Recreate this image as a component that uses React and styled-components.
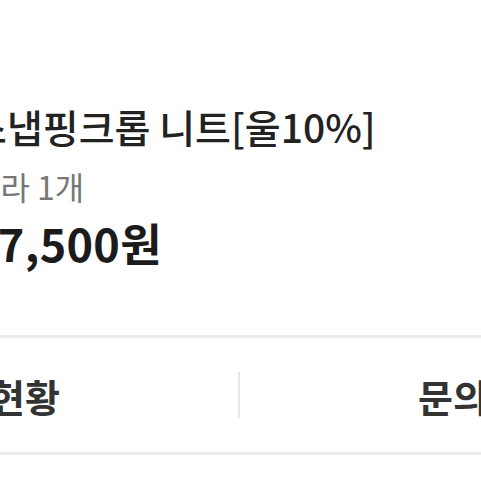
import React from "react";
import styled, { createGlobalStyle } from "styled-components";

const Global = createGlobalStyle`
  html, body { margin: 0; padding: 0; background: #ffffff; }
  body { font-family: "Noto Sans CJK KR", "Noto Sans", sans-serif; }
`;

const Page = styled.div`
  width: 481px;
  height: 481px;
  overflow: hidden;
  background: #ffffff;
  display: flex;
  flex-direction: column;
`;

const Info = styled.div`
  display: flex;
  flex-direction: column;
  margin-left: -29px;
  padding-top: 101px;
  height: 335px;
  box-sizing: border-box;
  flex-shrink: 0;
`;

const Title = styled.div`
  font-size: 39px;
  font-weight: 500;
  color: #222222;
  line-height: 50px;
  white-space: nowrap;
`;

const Option = styled.div`
  font-size: 32px;
  font-weight: 400;
  color: #777777;
  line-height: 40px;
  margin-top: 15px;
  white-space: nowrap;
`;

const Price = styled.div`
  font-size: 45px;
  font-weight: 700;
  color: #1b1b1b;
  line-height: 56px;
  letter-spacing: 0.3px;
  margin-top: 9px;
  white-space: nowrap;
`;

const Divider = styled.div`
  height: 3px;
  background: #ececec;
  flex-shrink: 0;
`;

const ActionRow = styled.div`
  display: flex;
  align-items: center;
  height: 114px;
  margin-left: -258px;
  width: 994px;
  flex-shrink: 0;
`;

const Action = styled.div`
  flex: 1;
  text-align: center;
  font-size: 38px;
  font-weight: 700;
  color: #333333;
  white-space: nowrap;
`;

const Separator = styled.div`
  width: 2px;
  height: 46px;
  background: #e6e6e6;
  flex-shrink: 0;
`;

export default function App() {
  return (
    <Page>
      <Global />
      <Info>
        <Title>스냅핑크롭 니트[울10%]</Title>
        <Option>코라 1개</Option>
        <Price>17,500원</Price>
      </Info>
      <Divider />
      <ActionRow>
        <Action>주문현황</Action>
        <Separator />
        <Action>문의하기</Action>
      </ActionRow>
      <Divider />
    </Page>
  );
}
